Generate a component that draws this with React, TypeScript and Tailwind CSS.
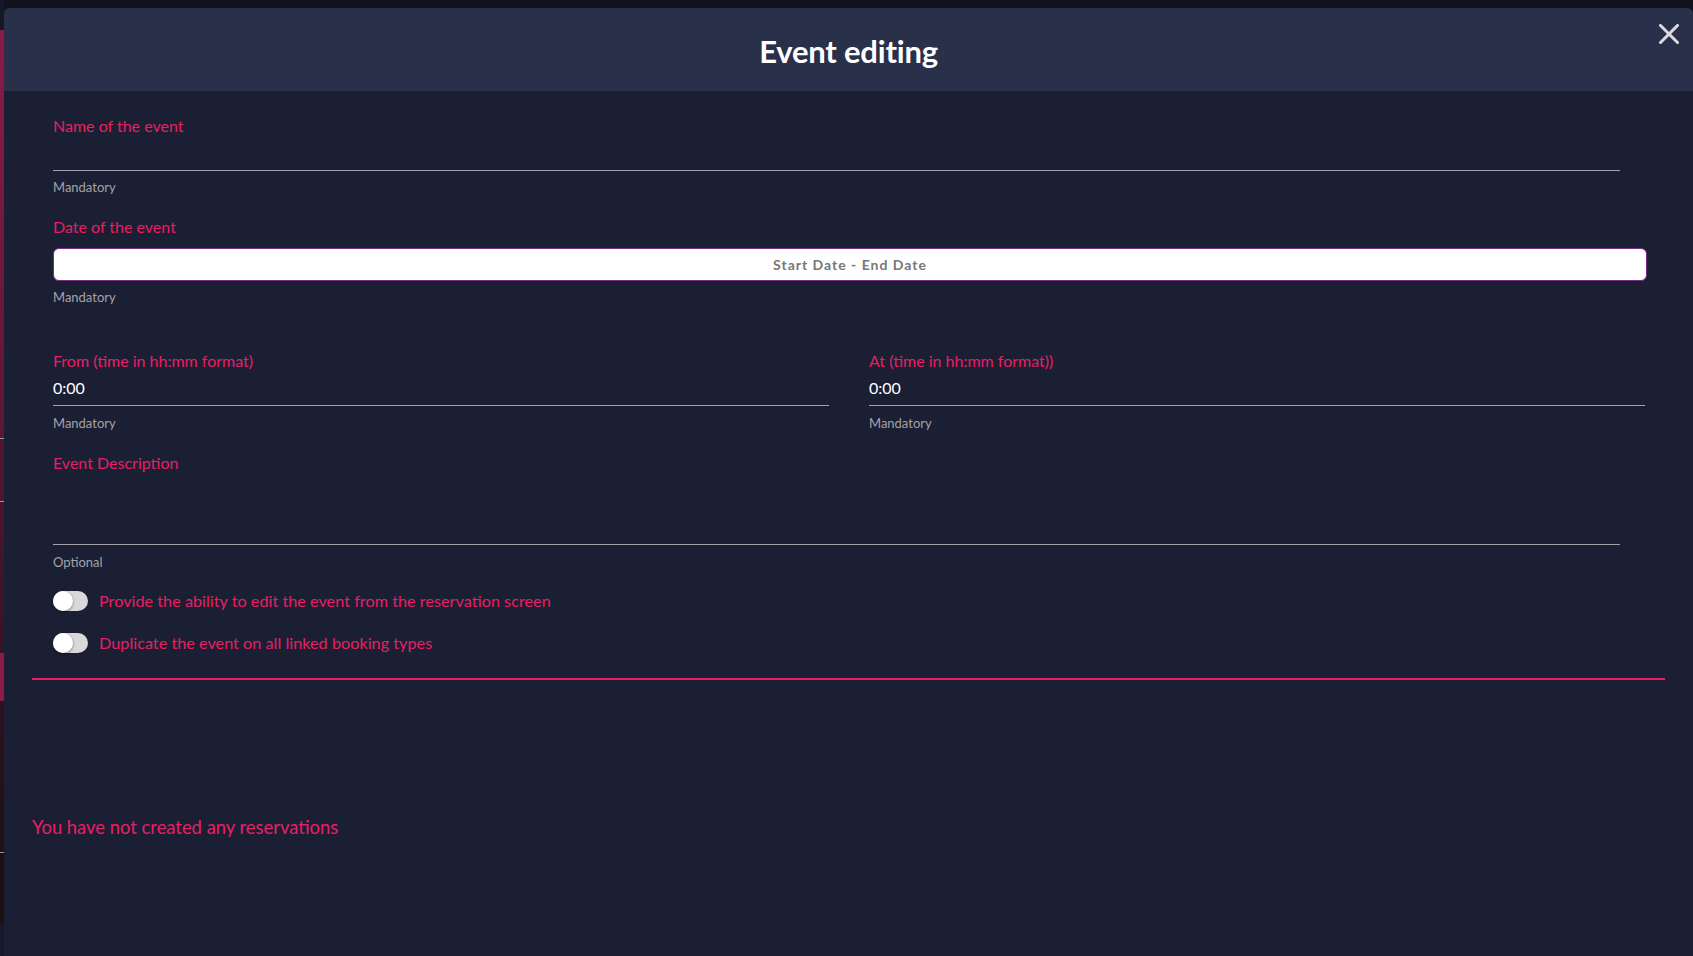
import React from 'react';

const font = { fontFamily: 'Lato, "Open Sans", sans-serif' };

const Toggle = ({ label }: { label: string }) => (
  <div className="flex items-center h-[20px]">
    <div className="relative w-[35px] h-[20px] rounded-full bg-[#d9d9d9] shrink-0">
      <div className="absolute left-0 top-0 w-[20px] h-[20px] rounded-full bg-white shadow-[0_1px_3px_rgba(0,0,0,0.45)]" />
    </div>
    <span className="ml-[11px] text-[16.25px] text-[#e91e63]">{label}</span>
  </div>
);

const Field = ({ label, value, hint, width, hintGap = 'mt-[9px]' }: { label: string; value?: string; hint: string; width: string; hintGap?: string }) => (
  <div className={width}>
    <div className="text-[16px] leading-[20px] text-[#e91e63]">{label}</div>
    <div className="h-[35px] pt-[7px] border-b border-[#a4a4a8] text-[16px] leading-[20px] text-white">{value}</div>
    <div className={`${hintGap} text-[13px] leading-[16px] text-[#a3a3a8]`}>{hint}</div>
  </div>
);

export default function App() {
  return (
    <div className="w-full h-[956px] bg-[#10131e] flex overflow-hidden" style={font}>
      {/* page behind the modal */}
      <div className="w-[4px] shrink-0 flex flex-col">
        <div className="h-[30px] bg-[#141829]" />
        <div className="h-[408px] bg-gradient-to-b from-[#8c1a4b] to-[#5b1636]" />
        <div className="h-[1px] bg-[#9a9aa0]" />
        <div className="h-[62px] bg-[#4e1530]" />
        <div className="h-[1px] bg-[#9a9aa0]" />
        <div className="h-[151px] bg-gradient-to-b from-[#4a1530] to-[#381226]" />
        <div className="h-[48px] bg-[#8c1a4b]" />
        <div className="h-[151px] bg-gradient-to-b from-[#2c1120] to-[#1f1017]" />
        <div className="h-[1px] bg-[#9a9aa0]" />
        <div className="h-[70px] bg-[#1a1012]" />
        <div className="flex-1 bg-[#141a2c]" />
      </div>

      <div className="flex-1 mt-[8px] rounded-t-[6px] bg-[#1b1f33] flex flex-col overflow-hidden">
        <div className="relative h-[83px] bg-[#29304a] flex items-center justify-center shrink-0">
          <h1 className="mt-[4px] text-[31px] font-bold text-white tracking-[-0.2px]">Event editing</h1>
          <button className="absolute right-[14px] top-[16px] w-[20px] h-[20px]">
            <svg viewBox="0 0 20 20" width="20" height="20">
              <path d="M1.5 1.5 L18.5 18.5 M18.5 1.5 L1.5 18.5" stroke="#dcdcdc" strokeWidth="3" strokeLinecap="square" />
            </svg>
          </button>
        </div>

        <div className="px-[28px] flex flex-col">
          <div className="pl-[21px] pr-[18px] pt-[25px] flex flex-col">
            <Field label="Name of the event" hint="Mandatory" width="w-[1567px]" hintGap="mt-[8px]" />

            <div className="mt-[22px] text-[16px] leading-[20px] text-[#e91e63]">Date of the event</div>
            <button className="mt-[11px] h-[33px] w-full rounded-[6px] bg-white border border-[#7a2c86] text-[14px] font-bold tracking-[1px] text-[#777777]">
              Start Date - End Date
            </button>
            <div className="mt-[8px] text-[13px] leading-[16px] text-[#a3a3a8]">Mandatory</div>

            <div className="mt-[46px] flex gap-[40px]">
              <Field label="From (time in hh:mm format)" value="0:00" hint="Mandatory" width="w-[776px]" />
              <Field label="At (time in hh:mm format))" value="0:00" hint="Mandatory" width="w-[776px]" />
            </div>

            <div className="mt-[22px] w-[1567px]">
              <div className="text-[16px] leading-[20px] text-[#e91e63]">Event Description</div>
              <div className="h-[72px] border-b border-[#a4a4a8]" />
              <div className="mt-[9px] text-[13px] leading-[16px] text-[#a3a3a8]">Optional</div>
            </div>

            <div className="mt-[21px] flex flex-col gap-[22px]">
              <Toggle label="Provide the ability to edit the event from the reservation screen" />
              <Toggle label="Duplicate the event on all linked booking types" />
            </div>
          </div>

          <div className="mt-[25px] h-[2px] bg-[#e91e63]" />

          <div className="mt-[135px] text-[18.4px] leading-[24px] text-[#e91e63]">You have not created any reservations</div>
        </div>
      </div>
    </div>
  );
}
